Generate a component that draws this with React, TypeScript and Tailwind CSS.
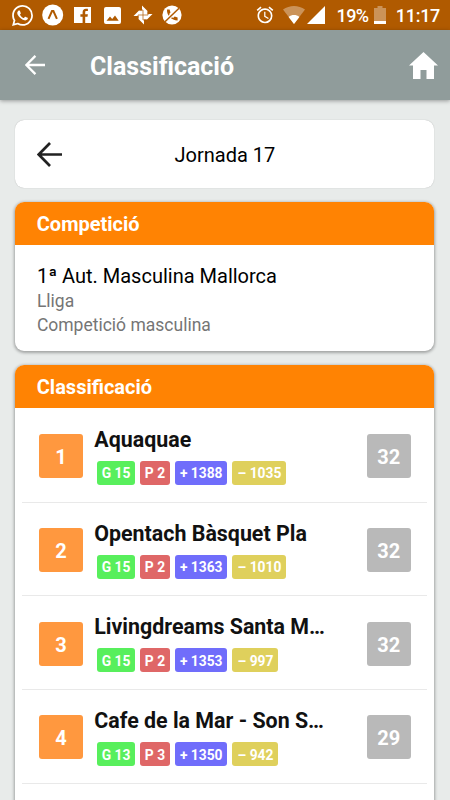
import type { ReactNode } from 'react'

interface Team {
  position: number
  name: string
  won: number
  lost: number
  scored: number
  conceded: number
  points: number
}

const TEAMS: Team[] = [
  { position: 1, name: 'Aquaquae', won: 15, lost: 2, scored: 1388, conceded: 1035, points: 32 },
  { position: 2, name: 'Opentach Bàsquet Pla', won: 15, lost: 2, scored: 1363, conceded: 1010, points: 32 },
  { position: 3, name: 'Livingdreams Santa M…', won: 15, lost: 2, scored: 1353, conceded: 997, points: 32 },
  { position: 4, name: 'Cafe de la Mar - Son S…', won: 13, lost: 3, scored: 1350, conceded: 942, points: 29 },
]

const StatusBar = () => (
  <div className="flex h-[30px] shrink-0 items-center bg-[#b05a00] pl-3 pr-[10px] text-white">
    {/* WhatsApp */}
    <svg className="h-[21px] w-[21px]" viewBox="0 0 24 24" fill="currentColor">
      <path d="M17.472 14.382c-.297-.149-1.758-.867-2.03-.967-.273-.099-.471-.148-.67.15-.197.297-.767.966-.94 1.164-.173.199-.347.223-.644.075-.297-.15-1.255-.463-2.39-1.475-.883-.788-1.48-1.761-1.653-2.059-.173-.297-.018-.458.13-.606.134-.133.298-.347.446-.52.149-.174.198-.298.298-.497.099-.198.05-.371-.025-.52-.075-.149-.669-1.612-.916-2.207-.242-.579-.487-.5-.669-.51-.173-.008-.371-.01-.57-.01-.198 0-.52.074-.792.372-.272.297-1.04 1.016-1.04 2.479 0 1.462 1.065 2.875 1.213 3.074.149.198 2.096 3.2 5.077 4.487.709.306 1.262.489 1.694.625.712.227 1.36.195 1.871.118.571-.085 1.758-.719 2.006-1.413.248-.694.248-1.289.173-1.413-.074-.124-.272-.198-.57-.347m-5.421 7.403h-.004a9.87 9.87 0 01-5.031-1.378l-.361-.214-3.741.982.998-3.648-.235-.374a9.86 9.86 0 01-1.51-5.26c.001-5.45 4.436-9.884 9.888-9.884 2.64 0 5.122 1.03 6.988 2.898a9.825 9.825 0 012.893 6.994c-.003 5.45-4.437 9.884-9.885 9.884m8.413-18.297A11.815 11.815 0 0012.05 0C5.495 0 .16 5.335.157 11.892c0 2.096.547 4.142 1.588 5.945L.057 24l6.305-1.654a11.882 11.882 0 005.683 1.448h.005c6.554 0 11.89-5.335 11.893-11.893a11.821 11.821 0 00-3.48-8.413z" />
    </svg>
    {/* Expo */}
    <svg className="ml-[9px] h-[22px] w-[22px]" viewBox="0 0 22 22">
      <circle cx="10.7" cy="11" r="10.5" fill="white" />
      <path d="M6.500 14.800 10 7h1.400l3.500 7.800" fill="none" stroke="#b05a00" strokeWidth="2" />
    </svg>
    {/* Facebook */}
    <svg className="ml-[10px] h-4 w-[17px]" viewBox="0 0 17 16">
      <path d="M0 0h17v16H0z" fill="white" />
      <path d="M8.6 16v-6.2H6.4V7.2h2.2V5.4c0-2.4 1.2-3.6 3.3-3.6h2V4h-1.4c-1 0-1.3.5-1.3 1.4v1.8h2.7l-.4 2.6h-2.3V16z" fill="#b05a00" />
    </svg>
    {/* Gallery */}
    <svg className="ml-[13px] h-[17px] w-[17px]" viewBox="0 0 17 17">
      <rect width="17" height="17" rx="2" fill="white" />
      <path d="m2.5 13.8 3.5-4.3 2.2 2.6 2.8-3.6 3.7 5.3z" fill="#b05a00" />
    </svg>
    {/* Photos pinwheel */}
    <svg className="ml-[12px] h-[20px] w-[20px]" viewBox="0 0 20 20" fill="white">
      <path d="M9 .5 14.500 6v3.500L10 10.500H9zM19.500 9 14 14.500h-3.500L9.500 10V9zM11 19.500 5.500 14v-3.500L10 9.500h1zM.5 11 6 5.500h3.500l1 4.500v1z" />
      <path d="M15 6.500v3.500h-5M13.500 15H10v-5M5 13.500V10h5M6.500 5H10v5" fill="none" stroke="#b05a00" strokeWidth=".7" />
    </svg>
    {/* Do-not-call */}
    <svg className="ml-[9px] h-5 w-5" viewBox="0 0 20 20" fill="none">
      <circle cx="10" cy="10" r="9.6" fill="white" />
      <path d="M5 4.600c-.4 5.900 4.500 10.900 10.600 10.900v-3l-3-.9-1.400 1.300c-1.800-1-3.200-2.400-4-4l1.300-1.500-.9-2.800z" fill="#b05a00" />
      <path d="M15.8 3.8 4.2 15.8" stroke="white" strokeWidth="3.4" />
      <path d="M17 3.200 3 16.800" stroke="#b05a00" strokeWidth="1.500" />
    </svg>
    {/* Alarm */}
    <svg className="ml-[73px] h-5 w-5" viewBox="0 0 24 24" fill="currentColor">
      <path d="m22 5.72-4.6-3.86-1.29 1.53 4.6 3.86zM7.88 3.39 6.6 1.86 2 5.71l1.29 1.53zM12.5 8H11v6l4.75 2.85.75-1.23-4-2.37zM12 4c-4.97 0-9 4.03-9 9s4.02 9 9 9a9 9 0 0 0 0-18m0 16c-3.87 0-7-3.13-7-7s3.13-7 7-7 7 3.13 7 7-3.13 7-7 7" />
    </svg>
    {/* Wi-Fi */}
    <svg className="ml-[8px] h-[18px] w-[22px]" viewBox="0 0 22 18" fill="white">
      <path d="M0 3.600C6.500-1.200 15.500-1.200 22 3.600L11 18z" fillOpacity=".35" />
      <path d="M5.600 11c3.200-2.600 7.600-2.600 10.800 0L11 18z" />
    </svg>
    {/* Mobile signal */}
    <svg className="ml-[2px] h-[18px] w-[18px]" viewBox="0 0 18 18">
      <path d="M18 0v18H0z" fill="white" />
    </svg>
    <span className="ml-[11.500px] w-[37.500px] pt-0.5 text-[18px] font-medium leading-none tracking-[-0.6px]">19%</span>
    {/* Battery */}
    <svg className="h-[18px] w-3" viewBox="0 0 12 18" fill="white">
      <path d="M3.500 0h5v2H12v16H0V2h3.500z" fillOpacity=".35" />
      <path d="M0 15h12v3H0z" />
    </svg>
    <span className="ml-auto pt-0.5 text-[18px] font-medium leading-none tracking-[-0.3px]">11:17</span>
  </div>
)

const BackArrow = ({ className }: { className: string }) => (
  <svg className={className} viewBox="0 0 24 24" fill="none" stroke="currentColor">
    <path d="M24 12H2M12.500 1 1.600 12l10.900 11" />
  </svg>
)

const Header = () => (
  <header className="z-10 flex h-[70px] shrink-0 items-center bg-[#909c9b] pl-[25px] pr-3 text-white shadow-[0_1px_4px_rgba(0,0,0,0.35)]">
    <BackArrow className="h-5 w-5 stroke-[2.800]" />
    <h1 className="ml-[45px] pt-[3px] text-[25px] font-bold leading-none">Classificació</h1>
    <svg className="ml-auto h-[27px] w-[29px]" viewBox="0 0 29 27" fill="currentColor">
      <path d="M14.500 0 29 13.500h-4V27h-7.500v-9h-6v9H4V13.500H0z" />
    </svg>
  </header>
)

const Card = ({ title, children }: { title: string; children: ReactNode }) => (
  <section className="overflow-hidden rounded-[9px] bg-white shadow-[0_1px_3px_1px_rgba(0,0,0,0.3)]">
    <h2 className="flex h-[43.500px] items-center bg-[#ff8303] px-[21.400px] pt-0.5 text-[20px] font-bold leading-none text-white">
      {title}
    </h2>
    {children}
  </section>
)

const Badge = ({ className, children }: { className: string; children: ReactNode }) => (
  <span className={`flex h-6 items-center justify-center rounded-[3px] pt-[3px] text-[13.800px] font-bold leading-none text-white ${className}`}>
    {children}
  </span>
)

const TeamRow = ({ team }: { team: Team }) => (
  <li className="mx-[7px] flex h-[93.700px] items-center border-b border-[#e9e9e9] pl-[16.600px] pr-[16.600px] pt-[2px]">
    <div className="flex h-11 w-11 items-center justify-center rounded-[3px] bg-[#ff983f] pt-0.5 text-[20px] font-bold text-white">
      {team.position}
    </div>
    <div className="ml-[11.300px] flex flex-1 flex-col whitespace-nowrap pb-[2px]">
      <h3 className="text-[21.400px] font-bold leading-[28px] text-[#111]">{team.name}</h3>
      <div className="ml-[2.700px] mt-[7px] flex gap-[5px]">
        <Badge className="w-[38px] bg-[#58ef5c]">G {team.won}</Badge>
        <Badge className="w-[30px] bg-[#df6767]">P {team.lost}</Badge>
        <Badge className="w-[52.500px] bg-[#706dfb]">+ {team.scored}</Badge>
        <Badge className={team.conceded > 999 ? 'w-[54px] bg-[#dfd05c]' : 'w-[46px] bg-[#dfd05c]'}>
          – {team.conceded}
        </Badge>
      </div>
    </div>
    <div className="flex h-11 w-11 items-center justify-center rounded-[3px] bg-[#b9b9b9] pt-0.5 text-[20px] font-bold text-white">
      {team.points}
    </div>
  </li>
)

export default function App() {
  return (
    <div className="flex h-[800px] w-[450px] flex-col overflow-hidden bg-[#e8ebea] font-['Roboto',sans-serif]">
      <StatusBar />
      <Header />
      <main className="flex flex-col gap-[13.500px] pl-[15.400px] pr-[15.600px] pt-5">
        <div className="flex h-[68px] items-center rounded-[9px] bg-white px-[21.300px] shadow-[0_0_1px_rgba(0,0,0,0.3)]">
          <BackArrow className="h-[25px] w-[25px] stroke-[2.600] text-[#222]" />
          <span className="flex-1 pr-[25px] pt-0.5 text-center text-[20px] leading-none">Jornada 17</span>
        </div>
        <Card title="Competició">
          <div className="h-[106px] px-[21.500px] pt-[18.500px]">
            <p className="text-[20px] leading-[25px]">1ª Aut. Masculina Mallorca</p>
            <p className="text-[17.500px] leading-6 text-[#757575]">Lliga</p>
            <p className="text-[17.500px] leading-6 text-[#757575]">Competició masculina</p>
          </div>
        </Card>
        <Card title="Classificació">
          <ul className="h-[480px] pt-px">
            {TEAMS.map((team) => (
              <TeamRow key={team.position} team={team} />
            ))}
          </ul>
        </Card>
      </main>
    </div>
  )
}
